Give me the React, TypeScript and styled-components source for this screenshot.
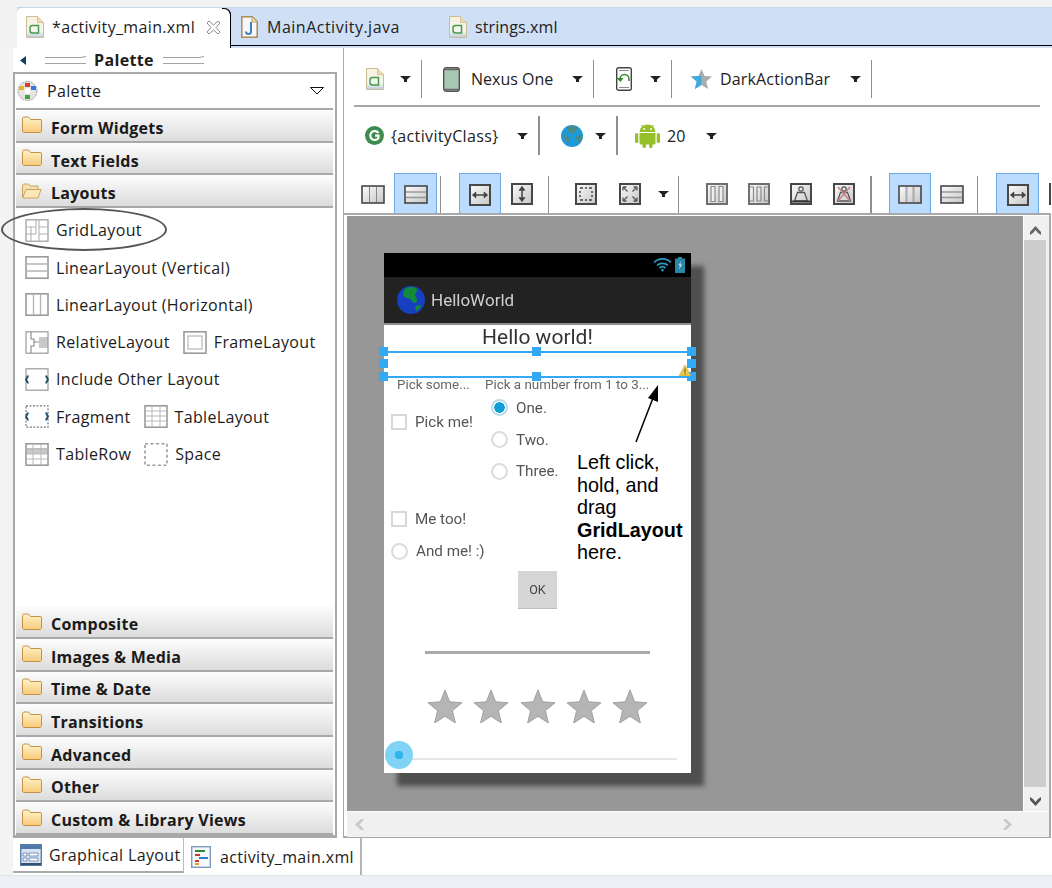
import React from "react";
import styled, { createGlobalStyle } from "styled-components";

const Global = createGlobalStyle`
  html, body { margin: 0; padding: 0; background: #fff; }
  #root { width: 1052px; height: 888px; overflow: hidden; }
  * { box-sizing: border-box; }
`;

const Page = styled.div`
  position: relative;
  width: 1052px;
  height: 888px;
  overflow: hidden;
  background: #fff;
  color: #1c1c1c;
  font-family: "Open Sans", "Noto Sans", sans-serif;
  font-size: 16px;
  letter-spacing: 0.35px;
  display: flex;
  flex-direction: column;
`;

/* ---------- top editor tabs ---------- */
const TopStrip = styled.div`
  height: 48px;
  flex: none;
  background: #f2f2f2;
  padding-top: 7px;
`;
const TabBar = styled.div`
  margin-left: 17px;
  height: 41px;
  background: linear-gradient(#c6d4e9 0 1px, #cfdff5 1px 38px, #000 38px 39px, #cfdff5 39px);
  display: flex;
  padding-top: 1px;
`;
const ActiveTab = styled.div`
  position: relative;
  width: 214px;
  height: 40px;
  background: #fff;
  border-radius: 5px 7px 0 0;
  border-right: 1px solid #000;
  display: flex;
  align-items: center;
  padding: 0 0 2px 9px;
  gap: 8px;
  &::after {
    content: "";
    position: absolute;
    right: -1px;
    top: 0;
    width: 8px;
    height: 8px;
    border-top: 1px solid #000;
    border-right: 1px solid #000;
    border-top-right-radius: 7px;
  }
`;
const TabCloser = styled.span`
  display: flex;
  margin-left: 3px;
`;
const PlainTab = styled.div<{ $w: number; $pad: number; $ls?: number }>`
  width: ${(p) => p.$w}px;
  padding-left: ${(p) => p.$pad}px;
  height: 37px;
  display: flex;
  align-items: center;
  padding-top: 1px;
  gap: ${(p) => (p.$ls !== undefined ? 8 : 9)}px;
  letter-spacing: ${(p) => p.$ls ?? 0.5}px;
  color: #222;
`;

/* ---------- workspace ---------- */
const Workspace = styled.div`
  flex: none;
  height: 790px;
  display: flex;
  padding-left: 13px;
  background: linear-gradient(90deg, #f3f3f3 13px, #fff 13px);
`;
const Sidebar = styled.aside`
  position: relative;
  width: 324px;
  flex: none;
  display: flex;
  flex-direction: column;
`;
const PaletteTitle = styled.div`
  height: 24px;
  flex: none;
  display: flex;
  align-items: center;
  padding-left: 7px;
  font-weight: 700;
`;
const TitleSpacer = styled.span`
  width: 19px;
  flex: none;
`;
const TitleText = styled.span`
  margin: 0 9px 0 8px;
`;
const PaletteBox = styled.div`
  flex: 1;
  border: 2px solid #a9a9a9;
  border-bottom-width: 3px;
  display: flex;
  flex-direction: column;
  padding: 0 2px 0 1px;
  min-height: 0;
`;
const PaletteSelect = styled.div`
  height: 36px;
  flex: none;
  display: flex;
  align-items: center;
  padding: 0 0 1px 1px;
  gap: 9px;
  border-bottom: 2px solid #a9a9a9;
`;
const SelectArrow = styled.span`
  margin-left: auto;
  margin-right: 9px;
  display: flex;
`;
const Category = styled.div`
  height: 32.7px;
  flex: none;
  background: linear-gradient(#fdfdfd, #dcdcdc);
  border-bottom: 2px solid #a9a9a9;
  display: flex;
  align-items: center;
  padding-left: 6px;
  gap: 9px;
  font-weight: 700;
  letter-spacing: 0.25px;
  color: #1a1a1a;
`;
const CategoryLabel = styled.span`
  padding-top: 5px;
`;
const ItemList = styled.div`
  flex: 1;
  padding: 3.6px 0 0 9px;
  display: flex;
  flex-direction: column;
`;
const ItemRow = styled.div`
  height: 37.3px;
  display: flex;
  align-items: center;
`;
const Item = styled.div<{ $gap?: number }>`
  display: flex;
  align-items: center;
  gap: 7px;
  margin-right: ${(p) => p.$gap ?? 0}px;
`;
const Oval = styled.div`
  position: absolute;
  left: -12px;
  top: 160px;
  width: 166px;
  height: 43px;
  border: 2px solid #555;
  border-radius: 50%;
  pointer-events: none;
`;
const Main = styled.main`
  flex: none;
  width: 708px;
  margin-left: 6px;
  border-left: 1px solid #a9a9a9;
  display: flex;
  flex-direction: column;
  overflow: hidden;
  letter-spacing: 0.15px;
`;
const Toolbar = styled.div`
  flex: none;
  display: flex;
  align-items: center;
`;
const ToolbarOne = styled(Toolbar)`
  height: 38px;
  margin: 12px 11px 0 10px;
`;
const ToolbarRule = styled.div`
  height: 2px;
  flex: none;
  margin: 7px 11px 0 10px;
  background: #a6a6a6;
`;
const ToolbarTwo = styled(Toolbar)`
  height: 39px;
  margin-top: 9px;
`;
const ToolGroup = styled.div<{ $w: number; $pad: number; $sep?: number }>`
  width: ${(p) => p.$w}px;
  height: 100%;
  flex: none;
  display: flex;
  align-items: center;
  padding-left: ${(p) => p.$pad}px;
  border-right: ${(p) => p.$sep ?? 0}px solid #8f8f8f;
`;
const ToolLabel = styled.span<{ $ml: number; $ls?: number }>`
  margin-left: ${(p) => p.$ml}px;
  letter-spacing: ${(p) => p.$ls ?? 0.15}px;
  white-space: nowrap;
  color: #222;
`;
const CaretSlot = styled.span`
  margin-left: auto;
  margin-right: 10px;
  display: flex;
`;
const CaretFree = styled.span<{ $ml: number }>`
  margin-left: ${(p) => p.$ml}px;
  display: flex;
`;
const IconStrip = styled.div`
  flex: none;
  height: 40px;
  margin-top: 18px;
  display: flex;
  padding-left: 7px;
  width: 760px;
`;
const IconButton = styled.div<{ $on?: boolean; $w?: number }>`
  flex: none;
  width: ${(p) => p.$w ?? 42}px;
  height: 40px;
  display: flex;
  align-items: center;
  justify-content: center;
  padding-top: 2px;
  background: ${(p) => (p.$on ? "#bcdcfd" : "transparent")};
  border: ${(p) => (p.$on ? "1px solid #6eaae8" : "none")};
  border-bottom: none;
`;
const StripSep = styled.div<{ $l: number; $r: number; $t?: number }>`
  flex: none;
  width: ${(p) => p.$t ?? 1}px;
  margin: 3px ${(p) => p.$r}px 0 ${(p) => p.$l}px;
  background: #8f8f8f;
`;
const StripCaret = styled.div`
  flex: none;
  width: 22px;
  padding-left: 6px;
  display: flex;
  align-items: center;
  padding-top: 2px;
`;

/* ---------- canvas ---------- */
const CanvasFrame = styled.section`
  flex: 1;
  min-height: 0;
  width: 707px;
  border-top: 2px solid #a9a9a9;
  border-right: 2px solid #a9a9a9;
  border-bottom: 2px solid #a9a9a9;
  padding: 1px 0 0 3px;
  display: grid;
  grid-template-columns: 676px 26px;
  grid-template-rows: 595px 26px;
`;
const Canvas = styled.div`
  background: #979797;
  padding: 37px;
  overflow: hidden;
`;
const VScroll = styled.div`
  margin-left: 1px;
  background: #f0f0f0;
  display: flex;
  flex-direction: column;
  padding-right: 3px;
`;
const ScrollCap = styled.div`
  height: 24px;
  flex: none;
  display: flex;
  align-items: center;
  justify-content: center;
  padding-top: 4px;
`;
const ScrollThumb = styled.div`
  flex: 1;
  background: #cdcdcd;
`;
const HScroll = styled.div`
  grid-column: 1 / 3;
  margin-top: 1px;
  background: #f0f0f0;
  display: flex;
  align-items: center;
  justify-content: space-between;
  padding: 0 36px 0 7px;
`;

/* ---------- device ---------- */
const Device = styled.div`
  position: relative;
  width: 307px;
  height: 520px;
  background: #fff;
  box-shadow: 13px 13px 5px #4f4f4f;
  letter-spacing: 0;
`;
const Screen = styled.div`
  width: 100%;
  height: 100%;
  display: flex;
  flex-direction: column;
  font-family: Roboto, "Liberation Sans", sans-serif;
  color: #555;
  filter: blur(0.45px);
`;
const StatusBar = styled.div`
  height: 24px;
  flex: none;
  background: #000;
  display: flex;
  align-items: center;
  justify-content: flex-end;
  gap: 3px;
  padding-right: 6px;
`;
const ActionBar = styled.div`
  height: 48px;
  flex: none;
  background: #222;
  border-bottom: 2px solid #8e8e8e;
  display: flex;
  align-items: center;
  padding-left: 13px;
  gap: 6px;
  color: #cfcfcf;
  font-size: 17px;
`;
const HelloTitle = styled.div`
  height: 26px;
  flex: none;
  text-align: center;
  font-size: 21px;
  line-height: 24px;
  color: #333;
`;
const DropZone = styled.div`
  position: relative;
  height: 27px;
  flex: none;
  border-top: 2px solid #33a9f5;
  border-bottom: 2px solid #33a9f5;
`;
const Handle = styled.span<{ $x: number; $y: number }>`
  position: absolute;
  width: 9px;
  height: 9px;
  background: #33a9f5;
  left: ${(p) => p.$x}px;
  top: ${(p) => p.$y}px;
`;
const Warn = styled.span`
  position: absolute;
  right: 0;
  bottom: 0;
  display: flex;
`;
const HeadRow = styled.div`
  height: 14px;
  flex: none;
  display: flex;
  padding-left: 13px;
  font-size: 13.4px;
  line-height: 13px;
  color: #666;
`;
const HeadCell = styled.span<{ $w: number }>`
  width: ${(p) => p.$w}px;
  flex: none;
  white-space: nowrap;
`;
const FormGrid = styled.div`
  flex: none;
  height: 175px;
  display: flex;
  padding-left: 7px;
`;
const FormCol = styled.div<{ $w: number; $top?: number }>`
  width: ${(p) => p.$w}px;
  flex: none;
  padding-top: ${(p) => p.$top ?? 0}px;
  display: flex;
  flex-direction: column;
`;
const ChoiceRow = styled.div<{ $mt?: number }>`
  height: 31.7px;
  flex: none;
  display: flex;
  align-items: center;
  gap: 8px;
  margin-top: ${(p) => p.$mt ?? 0}px;
  font-size: 15.2px;
  color: #555;
  white-space: nowrap;
`;
const CheckBox = styled.span`
  width: 16px;
  height: 16px;
  flex: none;
  border: 2px solid #d8d8d8;
`;
const RadioDot = styled.span<{ $on?: boolean }>`
  width: 17px;
  height: 17px;
  flex: none;
  border-radius: 50%;
  border: 2px solid ${(p) => (p.$on ? "#b9dbe9" : "#dcdcdc")};
  background: ${(p) => (p.$on ? "radial-gradient(circle, #0f9fd6 0 5px, #fff 5.5px)" : "#fff")};
`;
const OkButton = styled.div`
  width: 39px;
  height: 38px;
  margin: 4px 0 0 134px;
  flex: none;
  background: #d6d6d6;
  border-bottom: 1px solid #bdbdbd;
  display: flex;
  align-items: center;
  justify-content: center;
  font-size: 12.5px;
  color: #444;
`;
const Divider = styled.div`
  width: 225px;
  height: 3px;
  flex: none;
  margin: 42px auto 0;
  background: #aaa;
`;
const StarRow = styled.div`
  flex: none;
  margin-top: 35px;
  display: flex;
  justify-content: center;
  gap: 10.3px;
`;
const SliderArea = styled.div`
  position: relative;
  flex: 1;
`;
const Track = styled.div`
  position: absolute;
  left: 15px;
  right: 14px;
  top: 35px;
  height: 2px;
  background: #e6e6e6;
`;
const Thumb = styled.div`
  position: absolute;
  left: 1px;
  top: 18px;
  width: 28px;
  height: 28px;
  border-radius: 50%;
  background: radial-gradient(circle, #2fb4ec 0 4px, #7fd3f5 4.5px);
`;
const Callout = styled.div`
  position: absolute;
  left: 193px;
  top: 198px;
  font-family: "Liberation Sans", Arial, sans-serif;
  font-size: 19.8px;
  line-height: 22.5px;
  color: #000;
`;
const Arrow = styled.svg`
  position: absolute;
  left: 245px;
  top: 128px;
`;

/* ---------- bottom tabs ---------- */
const BottomTabs = styled.div`
  flex: none;
  height: 37px;
  display: flex;
  padding-left: 13px;
  background: linear-gradient(90deg, #f3f3f3 13px, #fff 13px);
`;
const EditorMode = styled.div<{ $w: number; $active?: boolean }>`
  width: ${(p) => p.$w}px;
  flex: none;
  height: ${(p) => (p.$active ? 35 : 37)}px;
  display: flex;
  align-items: center;
  padding: 1px 0 0 7px;
  gap: ${(p) => (p.$active ? 7 : 9)}px;
  white-space: nowrap;
  background: #fff;
  border-right: ${(p) => (p.$active ? "1px solid #bdbdbd" : "2px solid #b5b5b5")};
  border-bottom: ${(p) => (p.$active ? "2px solid #a9a9a9" : "none")};
`;
const Footer = styled.div`
  flex: 1;
  background: #edf1f6;
  border-top: 1px solid #e2e4e8;
`;

/* ---------- icons ---------- */
const FileXml = () => (
  <svg width="18" height="22" viewBox="0 0 18 22">
    <defs>
      <linearGradient id="fx" x1="0" y1="0" x2="0" y2="1">
        <stop offset="0" stopColor="#f8f1de" />
        <stop offset="0.7" stopColor="#f4f6ee" />
        <stop offset="1" stopColor="#b9cbdc" />
      </linearGradient>
    </defs>
    <path d="M.5.5h11l6 6v15H.5z" fill="url(#fx)" stroke="#cdbb95" />
    <path d="M11.5.5v6h6" fill="#f0d9ae" stroke="#d9c49b" />
    <path d="M12.5 9.500H6.500a2.500 2.500 0 0 0-2.500 2.500v2.500a2.500 2.500 0 0 0 2.500 2.500h6z" fill="none" stroke="#4a9a4c" strokeWidth="1.500" />
  </svg>
);
const FileJava = () => (
  <svg width="17" height="22" viewBox="0 0 17 22">
    <path d="M.8.8h10.400l5 5v15.400H.8z" fill="#f6f7f8" stroke="#a98b55" strokeWidth="1.500" />
    <path d="M11 1v5h5" fill="#efe0bd" stroke="#c2a56e" />
    <path d="M10 6v9.500a2.500 2.500 0 0 1-5 0" fill="none" stroke="#3f7fc4" strokeWidth="2" />
  </svg>
);
const Closer = () => (
  <svg width="15" height="15" viewBox="0 0 15 15">
    <path d="M1 3l2-2 4.500 4L12 1l2 2-4 4.500 4 4.500-2 2-4.500-4L3 14l-2-2 4-4.500z" fill="#fff" stroke="#8c8c8c" />
  </svg>
);
const Folder = ({ open }: { open?: boolean }) => (
  <svg width="20" height="18" viewBox="0 0 20 18">
    <defs>
      <linearGradient id="fo" x1="0" y1="0" x2="0" y2="1">
        <stop offset="0" stopColor="#fff3c9" />
        <stop offset="1" stopColor="#f8ca78" />
      </linearGradient>
    </defs>
    {open ? (
      <>
        <path d="M.5 15V3.500l1-1.500h5l1.500 2h8v3" fill="#f4dfb0" stroke="#c9a15f" />
        <path d="M.5 16L4 7.500h15L16 16z" fill="#fbe7b8" stroke="#c9a15f" />
      </>
    ) : (
      <path d="M.5 15.500V2.500l1-1.500h5l2 2.500h10.500l.5 1v11l-1 1H1.500z" fill="url(#fo)" stroke="#c4914a" />
    )}
  </svg>
);
const PaletteIcon = () => (
  <svg width="21" height="20" viewBox="0 0 21 20">
    <circle cx="10.500" cy="10" r="9.500" fill="#e4e4e4" stroke="#9a9a9a" strokeDasharray="2 1" />
    <circle cx="10.500" cy="10" r="3" fill="#fff" />
    <rect x="8" y="2" width="5" height="4" fill="#d93a2b" />
    <rect x="14" y="5" width="5" height="4" fill="#3a78d9" />
    <rect x="8" y="14" width="5" height="4" fill="#3fa63f" />
    <rect x="2" y="5" width="5" height="4" fill="#e8b520" />
  </svg>
);
const Caret = () => (
  <svg width="11" height="6" viewBox="0 0 11 6">
    <path d="M0 0h11L7 3.500V6H4V3.500z" fill="#222" />
  </svg>
);
const OutlineCaret = () => (
  <svg width="14" height="8" viewBox="0 0 14 8">
    <path d="M.5.5h13L7 7z" fill="#fff" stroke="#111" />
  </svg>
);
const NexusIcon = () => (
  <svg width="17" height="25" viewBox="0 0 17 25">
    <rect x=".7" y=".7" width="15.600" height="23.600" rx="2.500" fill="#a9c8b3" stroke="#555" strokeWidth="1.400" />
    <path d="M1 2.500h15M1 22.500h15" stroke="#666" strokeWidth="1.500" />
  </svg>
);
const RotateIcon = () => (
  <svg width="16" height="24" viewBox="0 0 16 24">
    <rect x=".7" y=".7" width="14.600" height="22.600" rx="2" fill="#fff" stroke="#444" strokeWidth="1.400" />
    <path d="M3 3.500h10M3 20.500h10" stroke="#888" />
    <path d="M4 12a4.500 4.500 0 0 1 9 0v2" fill="none" stroke="#2e8a2e" strokeWidth="1.500" />
    <path d="M.5 11l4 4 3-4z" fill="#2e8a2e" />
  </svg>
);
const ThemeStar = () => (
  <svg width="21" height="20" viewBox="0 0 21 20">
    <path d="M10.500 0l3 7 7.500.6-5.700 4.900 1.800 7.500-6.600-4-6.600 4 1.800-7.500L0 7.600 7.500 7z" fill="#a9acb0" />
    <path d="M10.500 7L7.500 7 0 7.600l5.700 4.900-1.800 7.500 6.600-4z" fill="#3fabe0" />
  </svg>
);
const ClassIcon = () => (
  <svg width="19" height="19" viewBox="0 0 19 19">
    <circle cx="9.500" cy="9.500" r="9.500" fill="#3d8b4e" />
    <path d="M13.500 7a4.500 4.500 0 1 0 0 5V9.700H10" fill="none" stroke="#fff" strokeWidth="2.200" />
  </svg>
);
const GlobeIcon = () => (
  <svg width="22" height="22" viewBox="0 0 22 22">
    <circle cx="11" cy="11" r="11" fill="#1c9ad9" />
    <path d="M7 1.500c3-1.500 7-1 9 1 1 2-1 3-2 4.500s-3 2-4 1-3-1-3.500-3S6 2 7 1.500zM15 11c2 0 5-1 6-2 .5 3-1 7-3 9-2-1-3-3-3-7zM3 10c2 0 4 1 5 3s0 4-1 5c-2-1-4-4-4-8z" fill="#4d8a86" />
  </svg>
);
const EarthIcon = () => (
  <svg width="28" height="28" viewBox="0 0 28 28">
    <circle cx="14" cy="14" r="14" fill="#1640c0" />
    <path d="M8 3c4-3 10-2 12 0 1 3-2 4-2 6s3 3 2 6-4 2-5 0-3-3-5-3-4-2-4-4 1-4 2-5zM19 20c2-1 5-1 5 0-1 3-3 4-5 5-1-2-1-4 0-5z" fill="#118a3a" />
  </svg>
);
const AndroidIcon = () => (
  <svg width="25" height="24" viewBox="0 0 25 24">
    <g fill="#96bf2a">
      <path d="M4.500 8a8 7.500 0 0 1 16 0z" />
      <path d="M6.500 1l2 3M18.500 1l-2 3" stroke="#96bf2a" strokeWidth="1.200" />
      <path d="M4.500 9h16v10a1.500 1.500 0 0 1-1.500 1.500H6A1.500 1.500 0 0 1 4.500 19z" />
      <rect x="0" y="9" width="3.300" height="10" rx="1.600" />
      <rect x="21.700" y="9" width="3.300" height="10" rx="1.600" />
      <rect x="7.500" y="19" width="3.400" height="5" rx="1.500" />
      <rect x="14.100" y="19" width="3.400" height="5" rx="1.500" />
    </g>
    <circle cx="9" cy="5" r="1" fill="#fff" />
    <circle cx="16" cy="5" r="1" fill="#fff" />
  </svg>
);

type ToolKind = "cols" | "rows" | "hfill" | "vfill" | "margins" | "expand" | "colsGray" | "colsWide" | "weight" | "weightX" | "colsOn";
const ToolIcon = ({ kind, uid }: { kind: ToolKind; uid: string }) => {
  const id = "t" + uid;
  const soft = kind === "colsGray" || kind === "colsWide";
  const flat = kind === "cols" || kind === "rows" || kind === "colsOn";
  const w = flat ? 24 : 22;
  const h = flat ? 19 : 22;
  return (
    <svg width={w} height={h} viewBox={`0 0 ${w} ${h}`}>
      <defs>
        <linearGradient id={id} x1="0" y1="0" x2="1" y2="1">
          <stop offset="0" stopColor="#fbfbfb" />
          <stop offset="1" stopColor="#c6c6c6" />
        </linearGradient>
      </defs>
      <rect x="1" y="1" width={w - 2} height={h - 2} fill={`url(#${id})`} stroke={soft ? "#6f6f6f" : "#474747"} strokeWidth={flat ? 1.6 : 2} />
      {(kind === "cols" || kind === "colsOn") && (
        <path d="M8.500 2v15M15.500 2v15" stroke={kind === "colsOn" ? "#aaa" : "#888"} strokeWidth={kind === "colsOn" ? 2 : 1} />
      )}
      {kind === "rows" && <path d="M2 7h20M2 12.500h20" stroke="#999" strokeWidth="1.500" />}
      {kind === "hfill" && <path d="M4 11h14M6.500 8v6M15.500 8v6M4 11l2.500-2v4zM18 11l-2.500-2v4z" stroke="#444" strokeWidth="1.500" fill="#444" />}
      {kind === "vfill" && <path d="M11 4v14M8 7h6M8 15h6M11 4l-2 3h4zM11 18l-2-3h4z" stroke="#444" strokeWidth="1.500" fill="#444" />}
      {kind === "margins" && <path d="M5 5h3M10 5h2M14 5h3M5 17h3M10 17h2M14 17h3M5 8v2M5 12v2M17 8v2M17 12v2" stroke="#444" strokeWidth="1.500" />}
      {kind === "expand" && <path d="M5 5l3.500 3.500M17 5l-3.500 3.500M5 17l3.500-3.500M17 17l-3.500-3.500M4 4h3.500M4 4v3.500M18 4h-3.500M18 4v3.500M4 18h3.500M4 18v-3.500M18 18h-3.500M18 18v-3.500" stroke="#555" strokeWidth="1.300" fill="none" />}
      {kind === "colsGray" && <path d="M5 3.500h4v15H5zM13 3.500h4v15h-4z" stroke="#8a8a8a" strokeWidth="1.200" fill="#eee" />}
      {kind === "colsWide" && <path d="M2 4h3.500v14H2M20 4h-3.500v14H20M9 4h4v14H9z" stroke="#8a8a8a" strokeWidth="1.200" fill="none" />}
      {(kind === "weight" || kind === "weightX") && (
        <>
          <circle cx="11" cy="6" r="2.200" fill="none" stroke="#555" strokeWidth="1.200" />
          <path d="M4.500 18l3-8.500h7l3 8.500z" fill="none" stroke="#555" strokeWidth="1.300" />
        </>
      )}
      {kind === "weight" && <path d="M2 18.500h18" stroke="#333" strokeWidth="2" />}
      {kind === "weightX" && <path d="M5 4l12 14M17 4L5 18" stroke="#c98080" strokeWidth="1.600" />}
    </svg>
  );
};

type LayoutKind = "grid" | "vertical" | "horizontal" | "relative" | "frame" | "include" | "fragment" | "table" | "row" | "space";
const LayoutIcon = ({ kind }: { kind: LayoutKind }) => {
  const dash = kind === "fragment" ? "2 1.500" : kind === "space" ? "3 2.500" : undefined;
  const thick = kind === "vertical" || kind === "horizontal" || kind === "frame" || kind === "row" || kind === "table" || kind === "space" ? 1.6 : 1.2;
  return (
    <svg width="24" height="23" viewBox="0 0 24 23">
      {kind === "row" && <rect x="1" y="5" width="22" height="6" fill="#c8c8c8" />}
      {kind === "relative" && <rect x="14" y="6" width="9" height="11" fill="#c8c8c8" />}
      <rect x="1" y=".8" width="22" height="21.400" fill="none" stroke={kind === "fragment" ? "#777" : "#9a9a9a"} strokeWidth={thick} strokeDasharray={dash} />
      {kind === "grid" && <path d="M1 8h10M14 8h9M1 15h10M14 15h9M14 1v21M6 8v14M11 1v14" stroke="#b4b4b4" strokeWidth="1.100" fill="none" />}
      {kind === "vertical" && <path d="M1 8h22M1 15h22" stroke="#b4b4b4" strokeWidth="1.300" />}
      {kind === "horizontal" && <path d="M8.500 1v21M15.500 1v21" stroke="#b4b4b4" strokeWidth="1.300" />}
      {kind === "relative" && <path d="M6 1v7H9v7H6v7M9 11h5" stroke="#888" strokeWidth="1.100" fill="none" />}
      {kind === "frame" && <rect x="5" y="5" width="14" height="13" fill="none" stroke="#b8b8b8" strokeWidth="1.200" />}
      {(kind === "include" || kind === "fragment") && (
        <path d="M3.500 8C1.500 8.500 2.500 11 .5 11.500c2 .5 1 3 3 3.500M20.500 8c2 .5 1 3 3 3.500-2 .5-1 3-3 3.500" fill="none" stroke="#1f4a66" strokeWidth="2" />
      )}
      {(kind === "table" || kind === "row") && <path d="M1 6h22M1 11h22M1 16h22M8 1v21M16 1v21" stroke="#b9b9b9" strokeWidth="1" />}
    </svg>
  );
};
const Grip = () => (
  <svg width="41" height="9" viewBox="0 0 41 9">
    <path d="M0 1.500h36l5-1M0 7.500h41" stroke="#a5a5a5" strokeWidth="1.200" fill="none" />
  </svg>
);
const BackArrow = () => (
  <svg width="6" height="9" viewBox="0 0 6 9">
    <path d="M6 0v9L0 4.500z" fill="#123e63" />
  </svg>
);
const Chevron = ({ dir, color }: { dir: "up" | "down" | "left" | "right"; color: string }) => {
  const r = { up: 0, right: 90, down: 180, left: 270 }[dir];
  return (
    <svg width="11" height="9" viewBox="0 0 11 9" style={{ transform: `rotate(${r}deg)` }}>
      <path d="M0 6l5.500-6L11 6v3L8 7 5.500 4 3 7 0 9z" fill={color} />
    </svg>
  );
};
const WifiIcon = () => (
  <svg width="19" height="16" viewBox="0 0 19 16">
    <path d="M1 5.500a12 12 0 0 1 17 0M4 8.500a8 8 0 0 1 11 0M6.500 11a4.500 4.500 0 0 1 6 0" stroke="#2a9ec9" strokeWidth="1.700" fill="none" />
    <path d="M8 13l1.500-1.500L11 13l-1.500 2z" fill="#2a9ec9" />
  </svg>
);
const BatteryIcon = () => (
  <svg width="10" height="16" viewBox="0 0 10 16">
    <path d="M3 0h4v1.500h3V16H0V1.500h3z" fill="#2a87a6" />
    <path d="M6 4L3.500 8.500H5L4 12.500 7 7.500H5.300z" fill="#cdeaf3" />
  </svg>
);
const WarnIcon = () => (
  <svg width="12" height="11" viewBox="0 0 12 11">
    <path d="M6 0l6 11H0z" fill="#eec94b" stroke="#b59a3a" strokeWidth=".5" />
    <path d="M6 3.500v4M6 8.500v1.200" stroke="#6a5720" strokeWidth="1.100" />
  </svg>
);
const RatingStar = () => (
  <svg width="36" height="34" viewBox="0 0 36 34">
    <path d="M18 1l4.600 11.800 12.400.9-9.600 8 3 12.300L18 27.300 7.600 34l3-12.300-9.600-8 12.400-.9z" fill="#b5b5b5" stroke="#a0a0a0" />
  </svg>
);
const DesignIcon = () => (
  <svg width="22" height="22" viewBox="0 0 22 22">
    <rect x=".7" y=".7" width="20.600" height="20.600" fill="#d8e4f2" stroke="#5b7fa8" strokeWidth="1.400" />
    <rect x="1" y="1" width="20" height="4" fill="#4f79ab" />
    <path d="M3 9h4v3H3zM9 9h9v3H9zM3 14h4v3H3zM9 14h9v3H9z" fill="#fff" stroke="#5b7fa8" strokeWidth=".8" />
    <rect x="1" y="19" width="20" height="2" fill="#30506f" />
  </svg>
);
const XmlIcon = () => (
  <svg width="20" height="22" viewBox="0 0 20 22">
    <rect x=".7" y=".7" width="18.600" height="20.600" fill="#f6f8fb" stroke="#7f9bc0" strokeWidth="1.400" />
    <path d="M4 5h10" stroke="#2e8a2e" strokeWidth="2" />
    <path d="M4 9h5" stroke="#d0342c" strokeWidth="2" />
    <path d="M8 12h9" stroke="#2a7fd4" strokeWidth="2" />
    <path d="M4 15h4" stroke="#d0342c" strokeWidth="2" />
    <path d="M4 18h4" stroke="#e0a020" strokeWidth="2" />
  </svg>
);

const handles: [number, number][] = [
  [-5, -6], [148, -6], [303, -6],
  [-5, 6], [303, 6],
  [-5, 19], [148, 19], [303, 19],
];

const rowItems: { a: [LayoutKind, string, number?]; b?: [LayoutKind, string] }[] = [
  { a: ["grid", "GridLayout"] },
  { a: ["vertical", "LinearLayout (Vertical)"] },
  { a: ["horizontal", "LinearLayout (Horizontal)"] },
  { a: ["relative", "RelativeLayout", 13], b: ["frame", "FrameLayout"] },
  { a: ["include", "Include Other Layout"] },
  { a: ["fragment", "Fragment", 13], b: ["table", "TableLayout"] },
  { a: ["row", "TableRow", 13], b: ["space", "Space"] },
];

export default function App() {
  return (
    <Page>
      <Global />
      <TopStrip>
        <TabBar>
          <ActiveTab>
            <FileXml />
            <span>*activity_main.xml</span>
            <TabCloser><Closer /></TabCloser>
          </ActiveTab>
          <PlainTab $w={217} $pad={10}><FileJava /><span>MainActivity.java</span></PlainTab>
          <PlainTab $w={200} $pad={1} $ls={0.1}><FileXml /><span>strings.xml</span></PlainTab>
        </TabBar>
      </TopStrip>

      <Workspace>
        <Sidebar>
          <PaletteTitle>
            <BackArrow />
            <TitleSpacer />
            <Grip />
            <TitleText>Palette</TitleText>
            <Grip />
          </PaletteTitle>
          <PaletteBox>
            <PaletteSelect>
              <PaletteIcon />
              <span>Palette</span>
              <SelectArrow><OutlineCaret /></SelectArrow>
            </PaletteSelect>
            <Category><Folder /><CategoryLabel>Form Widgets</CategoryLabel></Category>
            <Category><Folder /><CategoryLabel>Text Fields</CategoryLabel></Category>
            <Category><Folder open /><CategoryLabel>Layouts</CategoryLabel></Category>
            <ItemList>
              {rowItems.map((r) => (
                <ItemRow key={r.a[1]}>
                  <Item $gap={r.a[2]}><LayoutIcon kind={r.a[0]} /><span>{r.a[1]}</span></Item>
                  {r.b && <Item><LayoutIcon kind={r.b[0]} /><span>{r.b[1]}</span></Item>}
                </ItemRow>
              ))}
            </ItemList>
            {["Composite", "Images & Media", "Time & Date", "Transitions", "Advanced", "Other", "Custom & Library Views"].map((c) => (
              <Category key={c}><Folder /><CategoryLabel>{c}</CategoryLabel></Category>
            ))}
          </PaletteBox>
          <Oval />
        </Sidebar>

        <Main>
          <ToolbarOne>
            <ToolGroup $w={68} $pad={12} $sep={1}>
              <FileXml /><CaretSlot><Caret /></CaretSlot>
            </ToolGroup>
            <ToolGroup $w={172} $pad={21} $sep={1}>
              <NexusIcon /><ToolLabel $ml={11} $ls={0}>Nexus One</ToolLabel><CaretSlot><Caret /></CaretSlot>
            </ToolGroup>
            <ToolGroup $w={78} $pad={22} $sep={1}>
              <RotateIcon /><CaretSlot><Caret /></CaretSlot>
            </ToolGroup>
            <ToolGroup $w={200} $pad={19} $sep={1}>
              <ThemeStar /><ToolLabel $ml={8}>DarkActionBar</ToolLabel><CaretSlot><Caret /></CaretSlot>
            </ToolGroup>
          </ToolbarOne>
          <ToolbarRule />
          <ToolbarTwo>
            <ToolGroup $w={196} $pad={21} $sep={2}>
              <ClassIcon /><ToolLabel $ml={7} $ls={0.35}>{"{activityClass}"}</ToolLabel><CaretSlot><Caret /></CaretSlot>
            </ToolGroup>
            <ToolGroup $w={78} $pad={21} $sep={2}>
              <GlobeIcon /><CaretSlot><Caret /></CaretSlot>
            </ToolGroup>
            <ToolGroup $w={120} $pad={17}>
              <AndroidIcon /><ToolLabel $ml={7}>20</ToolLabel><CaretFree $ml={20}><Caret /></CaretFree>
            </ToolGroup>
          </ToolbarTwo>
          <IconStrip>
            <IconButton $w={43}><ToolIcon kind="cols" uid="a" /></IconButton>
            <IconButton $on $w={43}><ToolIcon kind="rows" uid="b" /></IconButton>
            <StripSep $l={3} $r={18} />
            <IconButton $on><ToolIcon kind="hfill" uid="c" /></IconButton>
            <IconButton><ToolIcon kind="vfill" uid="d" /></IconButton>
            <StripSep $l={5} $r={16} />
            <IconButton><ToolIcon kind="margins" uid="e" /></IconButton>
            <IconButton $w={45}><ToolIcon kind="expand" uid="f" /></IconButton>
            <StripCaret><Caret /></StripCaret>
            <StripSep $l={4} $r={16} />
            <IconButton $w={43}><ToolIcon kind="colsGray" uid="g" /></IconButton>
            <IconButton><ToolIcon kind="colsWide" uid="h" /></IconButton>
            <IconButton><ToolIcon kind="weight" uid="i" /></IconButton>
            <IconButton $w={44}><ToolIcon kind="weightX" uid="j" /></IconButton>
            <StripSep $l={4} $r={17} $t={2} />
            <IconButton $on><ToolIcon kind="colsOn" uid="k" /></IconButton>
            <IconButton><ToolIcon kind="rows" uid="l" /></IconButton>
            <StripSep $l={4} $r={18} />
            <IconButton $on $w={43}><ToolIcon kind="hfill" uid="m" /></IconButton>
            <IconButton><ToolIcon kind="vfill" uid="n" /></IconButton>
          </IconStrip>

          <CanvasFrame>
            <Canvas>
              <Device>
                <Screen>
                  <StatusBar><WifiIcon /><BatteryIcon /></StatusBar>
                  <ActionBar><EarthIcon /><span>HelloWorld</span></ActionBar>
                  <HelloTitle>Hello world!</HelloTitle>
                  <DropZone>
                    {handles.map(([x, y]) => <Handle key={`${x}-${y}`} $x={x} $y={y} />)}
                    <Warn><WarnIcon /></Warn>
                  </DropZone>
                  <HeadRow>
                    <HeadCell $w={88}>Pick some...</HeadCell>
                    <HeadCell $w={170}>Pick a number from 1 to 3...</HeadCell>
                  </HeadRow>
                  <FormGrid>
                    <FormCol $w={100} $top={14}>
                      <ChoiceRow><CheckBox />Pick me!</ChoiceRow>
                      <ChoiceRow $mt={65.8}><CheckBox />Me too!</ChoiceRow>
                      <ChoiceRow><RadioDot />And me! :)</ChoiceRow>
                    </FormCol>
                    <FormCol $w={100}>
                      <ChoiceRow><RadioDot $on />One.</ChoiceRow>
                      <ChoiceRow><RadioDot />Two.</ChoiceRow>
                      <ChoiceRow><RadioDot />Three.</ChoiceRow>
                    </FormCol>
                  </FormGrid>
                  <OkButton>OK</OkButton>
                  <Divider />
                  <StarRow>
                    {[0, 1, 2, 3, 4].map((i) => <RatingStar key={i} />)}
                  </StarRow>
                  <SliderArea>
                    <Track />
                    <Thumb />
                  </SliderArea>
                </Screen>
                <Arrow width="30" height="62" viewBox="0 0 30 62">
                  <path d="M7 61L24 17" stroke="#000" strokeWidth="1.500" />
                  <path d="M29 4L19 17l10 4z" fill="#000" />
                </Arrow>
                <Callout>
                  Left click,<br />hold, and<br />drag<br /><b>GridLayout</b><br />here.
                </Callout>
              </Device>
            </Canvas>
            <VScroll>
              <ScrollCap><Chevron dir="up" color="#666" /></ScrollCap>
              <ScrollThumb />
              <ScrollCap><Chevron dir="down" color="#555" /></ScrollCap>
            </VScroll>
            <HScroll>
              <Chevron dir="left" color="#c8c8c8" />
              <Chevron dir="right" color="#c8c8c8" />
            </HScroll>
          </CanvasFrame>
        </Main>
      </Workspace>

      <BottomTabs>
        <EditorMode $w={171} $active><DesignIcon /><span>Graphical Layout</span></EditorMode>
        <EditorMode $w={178}><XmlIcon /><span>activity_main.xml</span></EditorMode>
      </BottomTabs>
      <Footer />
    </Page>
  );
}
